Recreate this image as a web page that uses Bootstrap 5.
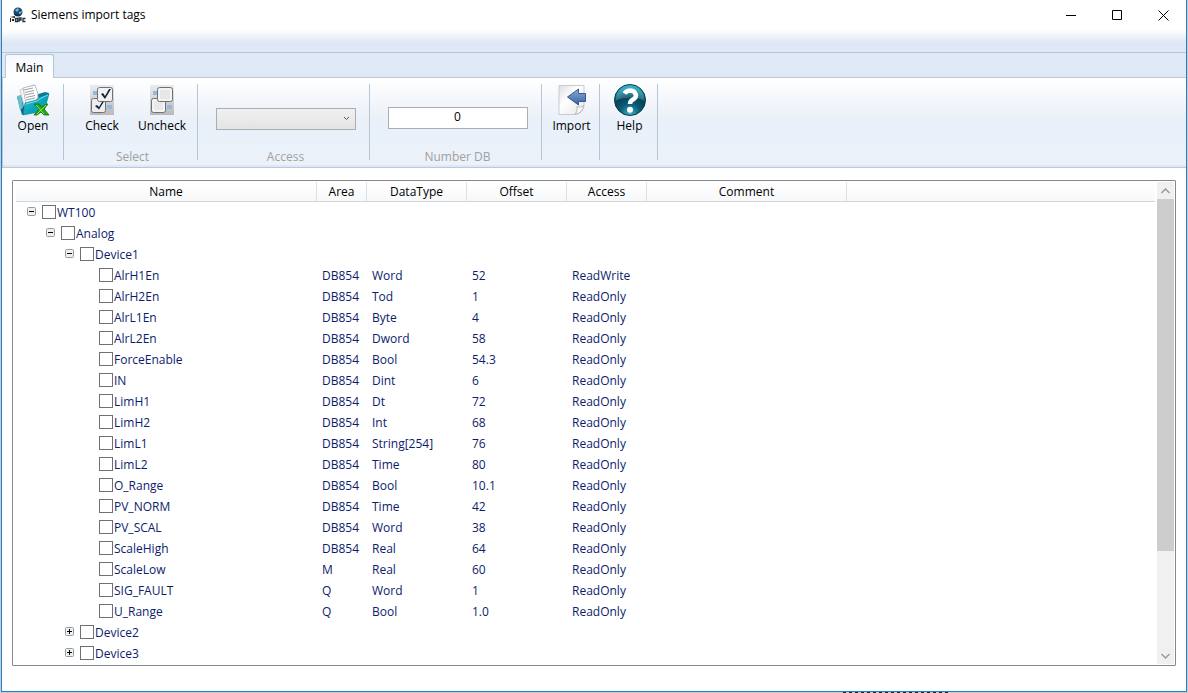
<!DOCTYPE html>
<html lang="en">
<head>
<meta charset="utf-8">
<meta name="viewport" content="width=device-width, initial-scale=1">
<title>Siemens import tags</title>
<link href="https://cdn.jsdelivr.net/npm/bootstrap@5.3.0/dist/css/bootstrap.min.css" rel="stylesheet">
<style>
  body { font-family: "Open Sans", "Noto Sans", sans-serif; font-size: 12px; line-height: 16px; color: #000; background: #c9cdd2; }
  button { font: inherit; color: inherit; background: none; border: 0; padding: 0; }
  svg { display: block; }
  .desk { height: 100vh; min-height: 400px; padding: 0 1px 1px; position: relative; }
  .desk::after { content: ""; position: absolute; left: 71%; bottom: 0; width: 108px; height: 1px;
    background: repeating-linear-gradient(90deg, #223 0 3px, #c9cdd2 3px 6px); }
  .app-window { background: #fff; border: 1px solid #1f80cc; border-top: 0; }
  .title-row { height: 30px; padding-left: 8px; }
  .title-text { margin-left: 5px; }
  .win-btn { width: 46px; height: 29px; display: flex; align-items: center; justify-content: center; }
  .quick-row { height: 23px; background: linear-gradient(#fff, #dfe9f5 12px); border-bottom: 1px solid #b4c6dc; }
  .tab-row { height: 25px; background: #dfe9f5; border-bottom: 1px solid #b9c9da; padding-left: 3px; }
  .tab-main { width: 49px; height: 24px; margin-bottom: -1px; padding-top: 2px; background: linear-gradient(#f5f9fe, #fff); border: 1px solid #b4c6dc; border-bottom: 0; border-radius: 3px 3px 0 0; }
  .ribbon { height: 90px; background: linear-gradient(#fff, #f0f4fa 30px, #e9f0f9 46px, #edf2fa); border-bottom: 1px solid #b9c9da; border-left: 1px solid #b9c9da; padding-top: 6px; box-shadow: inset 0 -2px #dfe8f4; }
  .tool-group { height: 76px; border-right: 1px solid #b4c6d8; display: flex; flex-direction: column; justify-content: space-between; }
  .w-tool { width: 58px; } .w-open { width: 61px; } .w-select { width: 134px; } .w-field { width: 172px; }
  .w-select, .w-field { padding-left: 4px; }
  .w-tool { padding-left: 2px; }
  .tool-btn { width: 60px; display: flex; flex-direction: column; align-items: center; }
  .tool-btn svg { margin-bottom: 2px; }
  .w-tool .tool-btn { width: 55px; }
  .check-pair { padding-left: 4px; }
  .group-name { color: #a0a0a0; text-align: center; margin-bottom: -5px; }
  .tool-select, .tool-input { width: 140px; height: 22px; border: 1px solid #abadb3; border-radius: 0; font: inherit; padding: 0 4px; margin: 23px auto 0; display: block; }
  .tool-select { appearance: none; background: linear-gradient(#f0f0f0, #e4e4e4); margin-top: 24px; }
  .select-box { position: relative; }
  .select-box svg { position: absolute; right: 19px; bottom: 9px; }
  .tool-input { text-align: center; padding-bottom: 3px; background: #fff; }
  .work { padding: 12px 10px 25px; }
  .tree-frame { border: 1px solid #828790; border-radius: 1px; padding: 1px 1px 1px 3px; }
  .tag-table { width: 100%; table-layout: fixed; border-collapse: separate; border-spacing: 0; }
  .tag-table th { height: 20px; padding: 0; font-weight: 400; text-align: center; background: linear-gradient(#fff, #f7f8fa); border-right: 1px solid #dedfe1; border-bottom: 1px solid #d5d5d5; }
  .tag-table th:last-child { border-right: 0; }
  .tag-table td { height: 21px; padding: 0 5px; color: #0d1c6c; white-space: nowrap; }
  .tree-cell { display: flex; align-items: center; height: 21px; }
  .lvl-0 { padding-left: 6px; } .lvl-1 { padding-left: 25px; } .lvl-2 { padding-left: 44px; } .lvl-3 { padding-left: 78px; }
  .node-toggle { width: 9px; height: 9px; margin: 0 6px 2px 0; flex: none; }
  .tag-check { appearance: none; width: 14px; height: 14px; margin: 0 1px 1px 0; border: 1px solid #707070; background: #fff; flex: none; }
  .tag-check:checked { background: #1f80cc; }
  .scroll-rail { width: 17px; background: #f0f0f0; margin-left: 2px; flex: none; }
  .scroll-rail button { height: 17px; display: flex; align-items: center; justify-content: center; }
  .rail-thumb { background: #cdcdcd; flex: 352 0 0; }
  .rail-rest { flex: 96 0 0; }
</style>
</head>
<body>
<div class="desk d-flex">
<div class="app-window flex-grow-1 d-flex flex-column">
  <header class="title-row d-flex align-items-center">
    <svg width="16" height="16" viewBox="0 0 16 16" aria-hidden="true">
      <circle cx="8" cy="5" r="4.5" fill="#174b6e"/><path d="M5 3l3-2 1 2-2 2zM9 5l3-1-1 4-2-1z" fill="#7fb4d2"/><path d="M4 7q4 3 8-1" stroke="#0a2032" fill="none"/>
      <path d="M0 11h1v4H0zM2 12h2v2H2zM0 10l5-1v2z" fill="#222"/>
      <path d="M5.500 14.500v-3h2v3zM9 15v-4h2v2H9M15.500 11.500H13v3h2.500" stroke="#26323c" fill="none" stroke-width="1.300"/>
    </svg>
    <span class="title-text flex-grow-1">Siemens import tags</span>
    <button class="win-btn" aria-label="Minimize"><svg width="11" height="11"><path d="M0 5.500h10" stroke="#000"/></svg></button>
    <button class="win-btn" aria-label="Maximize"><svg width="11" height="11"><path d="M.5.500h9v9h-9z" stroke="#000" fill="none"/></svg></button>
    <button class="win-btn" aria-label="Close"><svg width="11" height="11"><path d="M.5.500l10 10M10.500.500l-10 10" stroke="#000" fill="none"/></svg></button>
  </header>
  <div class="quick-row"></div>
  <div class="tab-row d-flex align-items-end" role="tablist"><button class="tab-main" role="tab" aria-selected="true">Main</button></div>

  <div class="ribbon d-flex">
    <div class="tool-group w-open">
      <button class="tool-btn">
        <svg width="34" height="32" viewBox="0 0 34 32" aria-hidden="true">
          <defs><linearGradient id="fold" x1="0" y1="0" x2="1" y2="1"><stop offset="0" stop-color="#38cadb"/><stop offset=".6" stop-color="#079eb8"/><stop offset="1" stop-color="#35d5e0"/></linearGradient></defs>
          <path d="M1 13l4-1 5 18-4 1z" fill="#15677e"/><path d="M1 12l4-1 2 12-3 4z" fill="#62c0cf"/>
          <path d="M16 12l13-4 4 1-4 14H14z" fill="#087a93"/>
          <path d="M4 6l14-5 6 17-15 7z" fill="#f8f9fa" stroke="#a7b2b6" stroke-width=".7"/>
          <path d="M7 4l12-3 3 9-2 12-9 3z" fill="#fff" stroke="#9ca5a9" stroke-width=".7"/>
          <path d="M8 6l9-2M9 8.500l9-2M9 11l9-2M10 13.500l9-2M10 16l9-2" stroke="#9a9fa2" fill="none"/>
          <path d="M9 19l11-3 4-3 9-3-5 17-21 4z" fill="url(#fold)" stroke="#078095" stroke-width=".6"/>
          <path d="M10 20l11-3 4-3 7-3" stroke="#8feaf0" fill="none" stroke-width=".8"/>
          <path d="M18 20h5l3 3 4-3h2l-4 5 5 6h-5l-3-3-4 3h-3l5-6z" fill="#23a522" stroke="#08720c" stroke-width=".8"/>
          <path d="M20 21l8 9M30 21l-9 9" stroke="#8ce74c" stroke-width="1"/>
        </svg>Open</button>
    </div>
    <div class="tool-group w-select">
      <div class="d-flex check-pair">
        <button class="tool-btn">
          <svg width="24" height="32" viewBox="0 0 24 32" aria-hidden="true"><defs><linearGradient id="sheet" x2="0" y2="1"><stop stop-color="#ececec"/><stop offset="1" stop-color="#b9b9b9"/></linearGradient></defs>
            <path d="M0 1h24v30H0z" fill="url(#sheet)"/><path d="M3 7h6v4H3zM17 21h5v4h-5z" fill="#93b7dd"/>
            <rect x="1.500" y="14.500" width="14" height="14" rx="2" fill="#eee" stroke="#6f7173"/>
            <rect x="7.500" y="3.500" width="15" height="14" rx="2" fill="#f2f2f2" stroke="#6f7173"/>
            <path d="M11 10l2-1 2 3 4-7h2l-6 10zM5 22l2-1 2 2 3-5 2-.5-5 8z" fill="#14233e"/></svg>Check</button>
        <button class="tool-btn">
          <svg width="24" height="32" viewBox="0 0 24 32" aria-hidden="true"><path d="M0 1h24v30H0z" fill="url(#sheet)"/><path d="M3 7h6v4H3zM17 21h5v4h-5z" fill="#93b7dd"/>
            <rect x="1.500" y="14.500" width="14" height="14" rx="2" fill="#e9e9e9" stroke="#6f7173"/><rect x="3" y="16" width="11" height="11" rx="1" fill="none" stroke="#fff"/>
            <rect x="7.500" y="3.500" width="15" height="14" rx="2" fill="#e7e7e7" stroke="#6f7173"/><rect x="9" y="5" width="12" height="11" rx="1" fill="none" stroke="#fff"/></svg>Uncheck</button>
      </div>
      <div class="group-name">Select</div>
    </div>
    <div class="tool-group w-field">
      <div class="select-box"><select class="tool-select" id="access" aria-label="Access" disabled><option></option></select>
        <svg width="7" height="5" aria-hidden="true"><path d="M1 1l2.500 2.500L6 1" stroke="#555" fill="none"/></svg></div>
      <label class="group-name" for="access">Access</label>
    </div>
    <div class="tool-group w-field">
      <input class="tool-input" id="dbnum" type="text" value="0">
      <label class="group-name" for="dbnum">Number DB</label>
    </div>
    <div class="tool-group w-tool">
      <button class="tool-btn">
        <svg width="30" height="32" viewBox="0 0 30 32" aria-hidden="true"><defs><linearGradient id="pg" x2="1" y2="1"><stop stop-color="#dcdedf"/><stop offset=".4" stop-color="#fff"/><stop offset="1" stop-color="#e4e5e6"/></linearGradient><linearGradient id="arr" x2="0" y2="1"><stop stop-color="#8cacd9"/><stop offset="1" stop-color="#36609e"/></linearGradient></defs>
          <path d="M2 1.500h25v19q-1 9-9 10H2z" fill="url(#pg)" stroke="#c9cbcd"/><path d="M18 30.500q3-3 2-8 4 2 7-1-1 7-9 9z" fill="#fafafa" stroke="#a9abad" stroke-width=".8"/>
          <path d="M10.500 13l11-8v4.500h7v8h-7V21z" fill="url(#arr)" stroke="#355b90"/></svg>Import</button>
    </div>
    <div class="tool-group w-tool">
      <button class="tool-btn">
        <svg width="32" height="32" viewBox="0 0 32 32" aria-hidden="true"><defs><radialGradient id="ball" cx=".5" cy=".95" r=".95"><stop stop-color="#3fb8c9"/><stop offset=".35" stop-color="#0b5c76"/><stop offset=".6" stop-color="#07415a"/><stop offset="1" stop-color="#35c8dc"/></radialGradient></defs>
          <circle cx="16" cy="16" r="15.500" fill="url(#ball)" stroke="#0a3448"/><path d="M2 16Q3 4 16 3q13 1 14 13-14-5-28 0z" fill="#7fc9d8" opacity=".3"/>
          <path d="M10.500 9.500q2-3 6-3T22 11q0 3-3 4.500-3 1.500-3 4.500" stroke="#fff" stroke-width="4.500" fill="none"/><circle cx="16" cy="25.800" r="3" fill="#fff"/></svg>Help</button>
    </div>
  </div>

  <main class="work flex-grow-1 d-flex overflow-hidden">
    <div class="tree-frame d-flex flex-grow-1 overflow-hidden">
      <div class="flex-grow-1 overflow-hidden">
        <table class="tag-table">
          <colgroup><col style="width:301px"><col style="width:50px"><col style="width:100px"><col style="width:100px"><col style="width:80px"><col style="width:200px"><col></colgroup>
          <thead><tr><th>Name</th><th>Area</th><th>DataType</th><th>Offset</th><th>Access</th><th>Comment</th><th></th></tr></thead>
          <tbody id="tags"></tbody>
        </table>
      </div>
      <div class="scroll-rail d-flex flex-column">
        <button aria-label="Scroll up"><svg width="9" height="6"><path d="M.5 5l4-4 4 4" stroke="#9a9a9a" stroke-width="1.500" fill="none"/></svg></button>
        <div class="rail-thumb"></div><div class="rail-rest"></div>
        <button aria-label="Scroll down"><svg width="9" height="6"><path d="M.5 1l4 4 4-4" stroke="#9a9a9a" stroke-width="1.500" fill="none"/></svg></button>
      </div>
    </div>
  </main>
</div>
</div>
<script src="https://cdn.jsdelivr.net/npm/bootstrap@5.3.0/dist/js/bootstrap.bundle.min.js"></script>
<script>
  // level, state ("-" open, "+" closed, "" leaf), name, area, type, offset, access
  const rows = [
    [0, "-", "WT100"], [1, "-", "Analog"], [2, "-", "Device1"],
    [3, "", "AlrH1En", "DB854", "Word", "52", "ReadWrite"],
    [3, "", "AlrH2En", "DB854", "Tod", "1", "ReadOnly"],
    [3, "", "AlrL1En", "DB854", "Byte", "4", "ReadOnly"],
    [3, "", "AlrL2En", "DB854", "Dword", "58", "ReadOnly"],
    [3, "", "ForceEnable", "DB854", "Bool", "54.3", "ReadOnly"],
    [3, "", "IN", "DB854", "Dint", "6", "ReadOnly"],
    [3, "", "LimH1", "DB854", "Dt", "72", "ReadOnly"],
    [3, "", "LimH2", "DB854", "Int", "68", "ReadOnly"],
    [3, "", "LimL1", "DB854", "String[254]", "76", "ReadOnly"],
    [3, "", "LimL2", "DB854", "Time", "80", "ReadOnly"],
    [3, "", "O_Range", "DB854", "Bool", "10.1", "ReadOnly"],
    [3, "", "PV_NORM", "DB854", "Time", "42", "ReadOnly"],
    [3, "", "PV_SCAL", "DB854", "Word", "38", "ReadOnly"],
    [3, "", "ScaleHigh", "DB854", "Real", "64", "ReadOnly"],
    [3, "", "ScaleLow", "M", "Real", "60", "ReadOnly"],
    [3, "", "SIG_FAULT", "Q", "Word", "1", "ReadOnly"],
    [3, "", "U_Range", "Q", "Bool", "1.0", "ReadOnly"],
    [2, "+", "Device2"], [2, "+", "Device3"]
  ];
  const toggle = s => !s ? "" : `<button class="node-toggle" aria-label="${s === "-" ? "Collapse" : "Expand"}"><svg width="9" height="9"><rect x=".5" y=".5" width="8" height="8" rx="1" fill="#f1efea" stroke="#8c9db0"/><path d="M2 4.500h5${s === "+" ? "M4.500 2v5" : ""}" stroke="#000"/></svg></button>`;
  document.getElementById("tags").innerHTML = rows.map(([lvl, s, name, ...v], i) =>
    `<tr><td><div class="tree-cell lvl-${lvl}">${toggle(s)}<input type="checkbox" class="tag-check" id="t${i}"><label for="t${i}">${name}</label></div></td>` +
    [0, 1, 2, 3, 4, 5].map(k => `<td>${v[k] || ""}</td>`).join("") + "</tr>").join("");
</script>
</body>
</html>
